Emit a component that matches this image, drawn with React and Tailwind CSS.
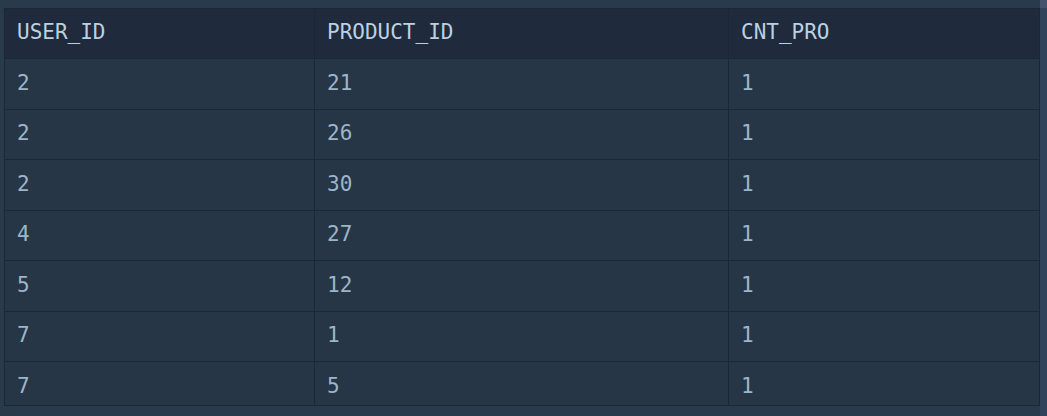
const columns = ['USER_ID', 'PRODUCT_ID', 'CNT_PRO'];

const rows = [
  ['2', '21', '1'],
  ['2', '26', '1'],
  ['2', '30', '1'],
  ['4', '27', '1'],
  ['5', '12', '1'],
  ['7', '1', '1'],
  ['7', '5', '1'],
];

const widths = ['w-[309px]', 'w-[414px]', 'flex-1'];

const App = () => {
  return (
    <div className="w-[1047px] h-[416px] bg-[#283a4c] flex font-['DejaVu_Sans_Mono',monospace] overflow-hidden">
      <div className="flex-1 pt-2 pl-1">
        {/* Result grid */}
        <div className="h-[398px] overflow-hidden border border-[#1b2636] bg-[#263646]">
          <div className="flex h-[50px] bg-[#1f2a3c] border-b border-[#1b2636] text-[21px] text-[#bcd0e2]">
            {columns.map((col, i) => (
              <div
                key={col}
                className={`${widths[i]} flex items-center pl-3 pb-px ${i > 0 ? 'border-l border-[#1b2636]' : ''}`}
              >
                {col}
              </div>
            ))}
          </div>
          {rows.map((row, r) => (
            <div key={r} className="flex h-[50.5px] border-b border-[#1b2636] text-[21px] text-[#9db5c9]">
              {row.map((cell, i) => (
                <div
                  key={i}
                  className={`${widths[i]} flex items-center pl-3 pb-px ${i > 0 ? 'border-l border-[#1b2636]' : ''}`}
                >
                  {cell}
                </div>
              ))}
            </div>
          ))}
        </div>
      </div>
      {/* Scrollbar track */}
      <div className="w-[7px] flex flex-col">
        <div className="h-2 bg-[#45526b]" />
        <div className="flex-1 bg-[#30435a]" />
      </div>
    </div>
  );
};

export default App;
